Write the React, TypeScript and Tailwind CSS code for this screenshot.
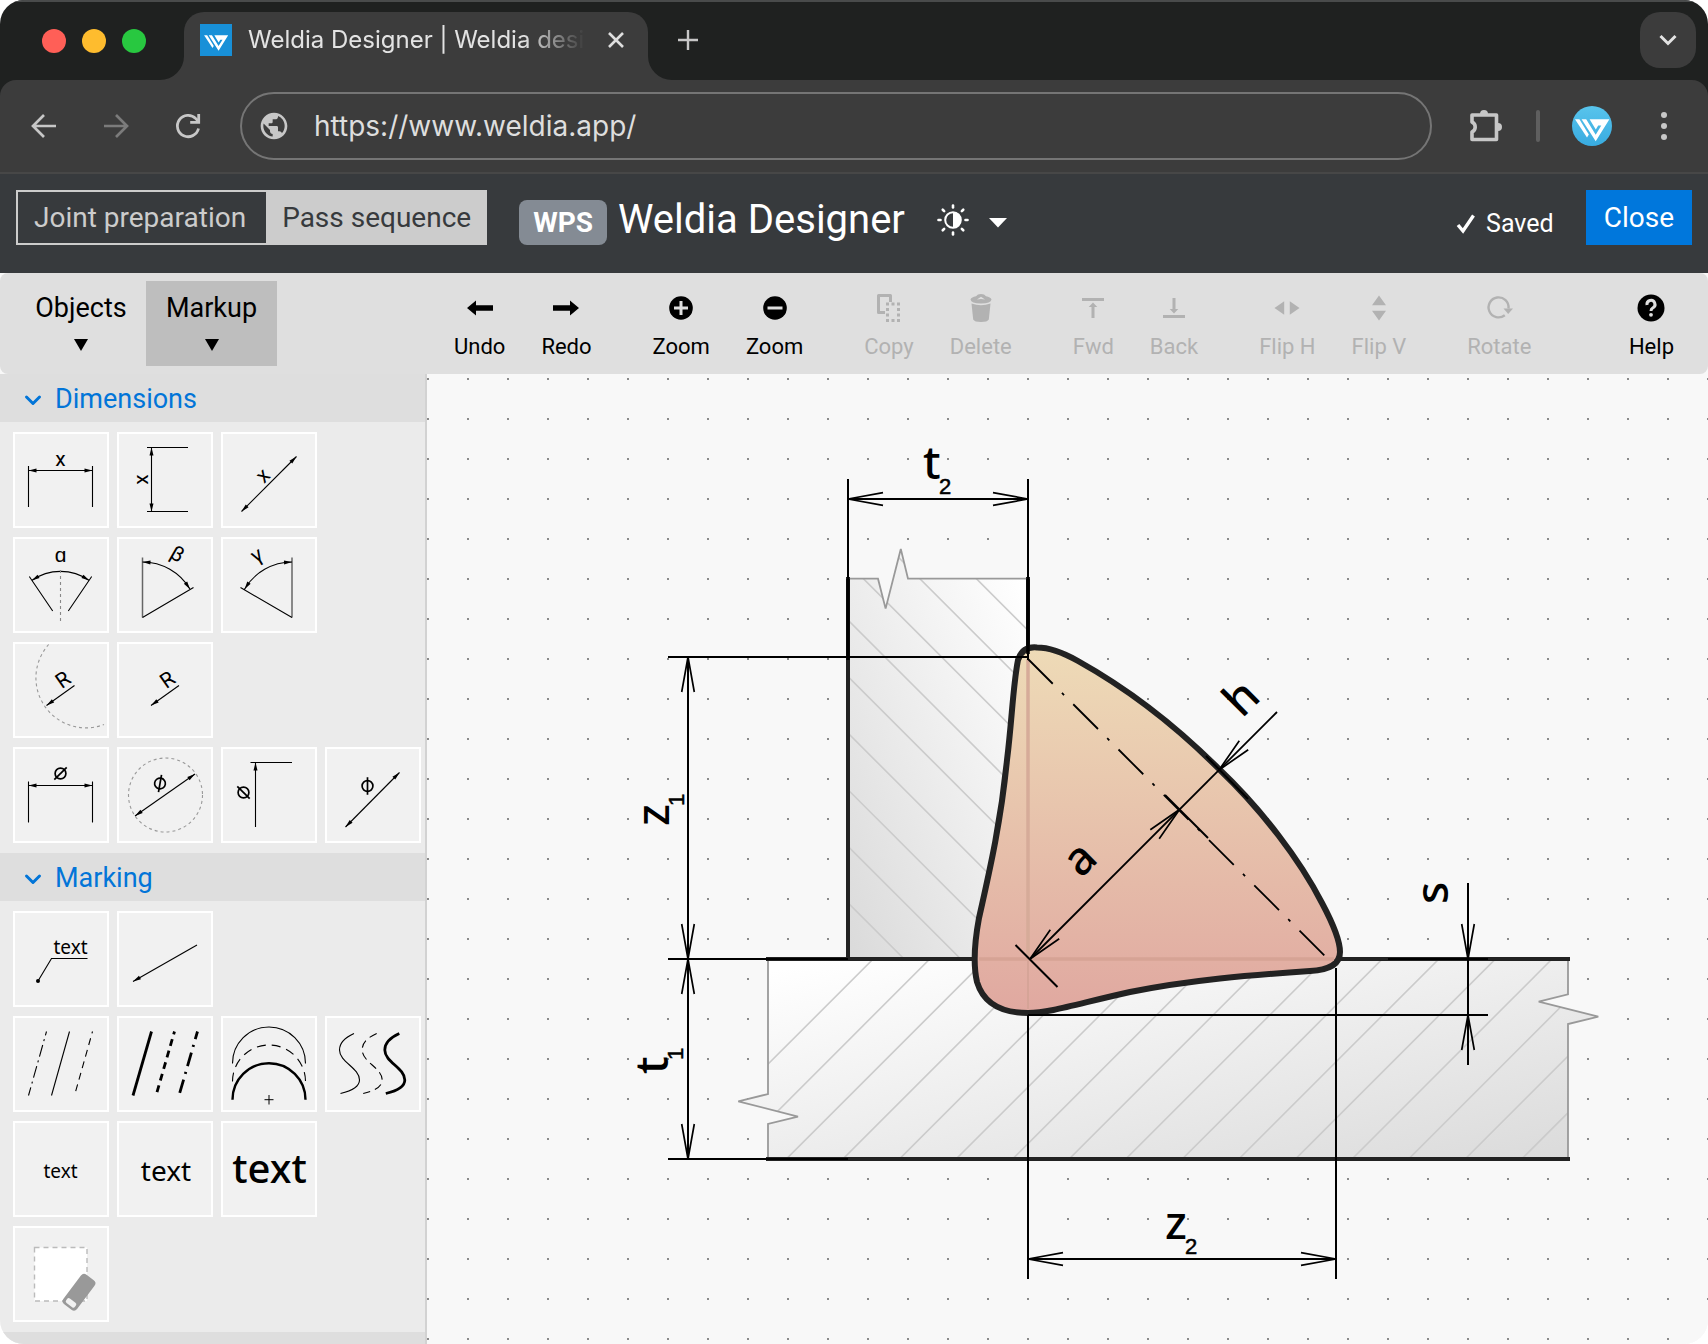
import React from "react";

type Kids = { children?: React.ReactNode };

/* ---------- browser chrome ---------- */

function Logo({ className }: { className: string }) {
  return (
    <svg viewBox="0 0 40 40" className={className} fill="#fff" aria-hidden="true">
      <path d="M3 13.3H7.4L16.8 28.6 15 31.6Z" />
      <path d="M9.6 13.3H14.2L23.7 28.7 29.3 19.6H26.2L23.8 23.4 17.6 13.3H37.4L23.7 35.2Z" />
    </svg>
  );
}

function Flare({ className }: { className: string }) {
  return (
    <svg viewBox="0 0 24 24" className={className} aria-hidden="true">
      <path d="M24 0A24 24 0 0 1 0 24H24Z" fill="#3c3c3c" />
    </svg>
  );
}

function TabStrip() {
  return (
    <div className="flex h-20 shrink-0 items-end border-t-2 border-[#494b4b] bg-[#1f2120]">
      <div className="flex h-20 items-center gap-4 pt-0.5 pr-[38px] pl-[42px]">
        <span className="size-6 rounded-full bg-[#ff5f57]" />
        <span className="size-6 rounded-full bg-[#febc2e]" />
        <span className="size-6 rounded-full bg-[#28c840]" />
      </div>
      <div className="relative flex h-[68px] w-[464px] items-center rounded-t-[20px] bg-[#3c3c3c] pb-3 pl-4">
        <Flare className="absolute bottom-0 -left-6 size-6" />
        <Flare className="absolute -right-6 bottom-0 size-6 -scale-x-100" />
        <span className="flex size-8 items-center justify-center bg-[#1890d8]">
          <Logo className="size-7" />
        </span>
        <span className="ml-4 w-[344px] font-[Inter,sans-serif] text-2xl whitespace-nowrap text-[#e3e3e3] [mask-image:linear-gradient(to_right,#000_80%,transparent_98%)]">
          Weldia Designer | Weldia desi
        </span>
        <button type="button" aria-label="Close tab" className="ml-3 text-[#dedede]">
          <svg viewBox="0 0 24 24" className="size-6" fill="none" stroke="currentColor" strokeWidth="2.6">
            <path d="M5 5 19 19M19 5 5 19" />
          </svg>
        </button>
      </div>
      <button type="button" aria-label="New tab" className="mb-7 ml-7 text-[#c7c7c7]">
        <svg viewBox="0 0 24 24" className="size-6" fill="none" stroke="currentColor" strokeWidth="2.4">
          <path d="M12 2V22M2 12H22" />
        </svg>
      </button>
      <button
        type="button"
        aria-label="Search tabs"
        className="mr-3 mb-3 ml-auto flex size-14 items-center justify-center rounded-[20px] bg-[#3c3c3c] text-[#e3e3e3]"
      >
        <svg viewBox="0 0 24 24" className="size-6" fill="none" stroke="currentColor" strokeWidth="3">
          <path d="M4.500 8 12 15.500 19.500 8" />
        </svg>
      </button>
    </div>
  );
}

function AddressBar() {
  return (
    <div className="bg-[#1f2120]">
      <div className="flex h-[94px] items-center rounded-t-2xl border-b-2 border-[#474747] bg-[#3c3c3c] text-[#c7c7c7]">
        <button type="button" aria-label="Back" className="ml-7">
          <svg viewBox="0 0 32 32" className="size-8" fill="none" stroke="currentColor" strokeWidth="2.700">
            <path d="M28 16H5.500M16 5 5 16 16 27" />
          </svg>
        </button>
        <button type="button" aria-label="Forward" className="ml-10 text-[#7b7b7b]">
          <svg viewBox="0 0 32 32" className="size-8" fill="none" stroke="currentColor" strokeWidth="2.700">
            <path d="M4 16H26.500M16 5 27 16 16 27" />
          </svg>
        </button>
        <button type="button" aria-label="Reload" className="ml-10">
          <svg viewBox="0 0 32 32" className="size-8" fill="none" stroke="currentColor" strokeWidth="2.800">
            <path d="M26.500 18.500A10.700 10.700 0 1 1 23.800 8.600L26.500 11.500" />
            <path d="M26.700 4V12.400H18.200" />
          </svg>
        </button>
        <div className="relative ml-9 flex h-[68px] flex-1 items-center rounded-full border-2 border-[#757575] pl-4">
          <svg viewBox="0 0 24 24" className="size-8 shrink-0" fill="currentColor" aria-hidden="true">
            <path d="M12 2C6.480 2 2 6.480 2 12s4.480 10 10 10 10-4.480 10-10S17.520 2 12 2zm-1 17.930c-3.950-.490-7-3.850-7-7.930 0-.620.080-1.210.210-1.790L9 15v1c0 1.100.900 2 2 2v1.930zm6.900-2.540c-.260-.810-1-1.390-1.900-1.390h-1v-3c0-.550-.450-1-1-1H8v-2h2c.550 0 1-.450 1-1V7h2c1.100 0 2-.900 2-2v-.410c2.930 1.190 5 4.060 5 7.410 0 2.080-.800 3.970-2.100 5.390z" />
          </svg>
          <input
            aria-label="Address"
            defaultValue="https://www.weldia.app/"
            className="ml-6 min-w-0 flex-1 bg-transparent font-[Inter,sans-serif] text-[28px] text-[#dedede] outline-none"
          />
        </div>
        <button type="button" aria-label="Extensions" className="ml-8">
          <svg viewBox="0 0 40 40" className="size-10" aria-hidden="true">
            <path
              d="M8 9H32.500V33.500H8V26A5.500 5.500 0 0 0 8 16Z"
              fill="none"
              stroke="currentColor"
              strokeWidth="3.600"
              strokeLinejoin="round"
            />
            <path d="M16 8A4 4 0 0 1 24 8ZM34 17A4 4 0 0 1 34 25Z" fill="currentColor" />
          </svg>
        </button>
        <span className="ml-8 h-8 w-1 rounded-full bg-[#5f5f5f]" />
        <button
          type="button"
          aria-label="Profile"
          className="ml-8 size-10 rounded-full bg-linear-to-b from-[#58c4ec] to-[#38abe0]"
        >
          <Logo className="size-10" />
        </button>
        <button type="button" aria-label="Menu" className="mr-7 ml-9">
          <svg viewBox="0 0 32 32" className="size-8" fill="currentColor">
            <circle cx="16" cy="5" r="3" />
            <circle cx="16" cy="16" r="3" />
            <circle cx="16" cy="27" r="3" />
          </svg>
        </button>
      </div>
    </div>
  );
}

/* ---------- application header ---------- */

const rays = [0, 45, 90, 135, 180, 225, 270, 315];

function AppHeader() {
  return (
    <header className="flex h-[99px] shrink-0 items-start bg-[#373a3d] px-4 pt-4 text-white">
      <div className="flex h-[55px] border-2 border-[#ccc] text-[28px]">
        <button type="button" className="pr-5 pl-4 leading-[51px] text-[#ccc]">
          Joint preparation
        </button>
        <button type="button" className="bg-[#ccc] pr-3.5 pl-4 leading-[51px] text-[#373a3d]">
          Pass sequence
        </button>
      </div>
      <span className="mt-2.5 ml-8 h-[45px] rounded-lg bg-[#848b94] px-3.5 text-[28px] leading-[45px] font-bold">
        WPS
      </span>
      <h1 className="ml-[11px] text-[40px] leading-[60px]">Weldia Designer</h1>
      <button type="button" aria-label="Theme" className="mt-3.5 ml-8 flex items-center gap-5">
        <svg viewBox="0 0 32 32" className="size-8" aria-hidden="true">
          <circle cx="16" cy="16" r="7.800" fill="none" stroke="#fff" strokeWidth="2" />
          <path d="M16 8A8 8 0 0 1 16 24Z" fill="#fff" />
          {rays.map((r) => (
            <path
              key={r}
              d="M16 1.500V3.500"
              stroke="#fff"
              strokeWidth="2.600"
              strokeLinecap="round"
              transform={`rotate(${r} 16 16)`}
            />
          ))}
        </svg>
        <svg viewBox="0 0 18 10" className="mt-1.5 h-2.5 w-[18px]" fill="#fff" aria-hidden="true">
          <path d="M0 0H18L9 9.500Z" />
        </svg>
      </button>
      <span className="mt-4 mr-8 ml-auto flex items-center gap-2.5 text-[25px] leading-9">
        <svg viewBox="0 0 20 20" className="size-5" fill="none" stroke="#fff" strokeWidth="3.400" aria-hidden="true">
          <path d="M2 11 7 17 17.500 1.500" />
        </svg>
        Saved
      </span>
      <button type="button" className="h-[55px] bg-[#0077dc] px-[18px] text-[28px]">
        Close
      </button>
    </header>
  );
}

/* ---------- toolbar ---------- */

function Icon({ children }: Kids) {
  return (
    <svg viewBox="0 0 32 32" className="size-8" fill="currentColor" aria-hidden="true">
      {children}
    </svg>
  );
}

const icons = {
  undo: <path d="M3 16 12 8.500V13.200H29V18.800H12V23.500Z" />,
  redo: <path d="M29 16 20 8.500V13.200H3V18.800H20V23.500Z" />,
  plus: (
    <>
      <circle cx="16" cy="16" r="11.800" />
      <path d="M16 9V23M9 16H23" stroke="#dfdfdf" strokeWidth="3" />
    </>
  ),
  minus: (
    <>
      <circle cx="16" cy="16" r="11.800" />
      <path d="M8.500 16H23.500" stroke="#dfdfdf" strokeWidth="3" />
    </>
  ),
  copy: (
    <>
      <path d="M17.500 10V3.500H5.500V20.500H12" fill="none" stroke="currentColor" strokeWidth="3" strokeLinejoin="round" />
      <path
        d="M13 10.500h3v3h-3zM18.500 10.500h3v3h-3zM24 10.500h3v3h-3zM13 16h3v3h-3zM24 16h3v3h-3zM13 21.500h3v3h-3zM24 21.500h3v3h-3zM13 27h3v3h-3zM18.500 27h3v3h-3zM24 27h3v3h-3z"
      />
    </>
  ),
  trash: (
    <>
      <path d="M6.500 11.500Q16 15 25.500 11.500L23.800 27.500Q22.500 30 16 30T8.200 27.500Z" />
      <path d="M5.500 7.600Q6.500 5 11 4.300Q12.500 2 16 2T21 4.300Q25.500 5 26.500 7.600Q26 11.500 16 11.500T5.500 7.600ZM12 7.600 16 4.800 20 7.600Q16 6.500 12 7.600Z" fillRule="evenodd" />
    </>
  ),
  fwd: <path d="M5 6H27V9H5ZM16 10.500 20.300 15H17.500V26H14.500V15H11.700Z" />,
  back: <path d="M5 26H27V23H5ZM16 21.500 20.300 17H17.500V6H14.500V17H11.700Z" />,
  flipH: <path d="M3.500 16 13.200 9.300V22.700ZM28.500 16 18.800 9.300V22.700Z" />,
  flipV: <path d="M16 3.500 9 13.200H23ZM16 28.500 9 18.800H23Z" />,
  rotate: (
    <>
      <path d="M21.800 23.200A10 10 0 1 1 25.500 16.500" fill="none" stroke="currentColor" strokeWidth="2.400" />
      <path d="M20.500 16.500H30L25.200 22Z" />
    </>
  ),
  help: (
    <>
      <circle cx="16" cy="16" r="13.500" />
      <path d="M12 13A4 4 0 1 1 17.700 16Q16 17 16 19" fill="none" stroke="#dfdfdf" strokeWidth="3" />
      <circle cx="16" cy="22.800" r="1.900" fill="#dfdfdf" />
    </>
  ),
};

type Tool = { label: string; icon: keyof typeof icons; off?: boolean };

const groups: Tool[][] = [
  [
    { label: "Undo", icon: "undo" },
    { label: "Redo", icon: "redo" },
  ],
  [
    { label: "Zoom", icon: "plus" },
    { label: "Zoom", icon: "minus" },
  ],
  [
    { label: "Copy", icon: "copy", off: true },
    { label: "Delete", icon: "trash", off: true },
  ],
  [
    { label: "Fwd", icon: "fwd", off: true },
    { label: "Back", icon: "back", off: true },
  ],
  [
    { label: "Flip H", icon: "flipH", off: true },
    { label: "Flip V", icon: "flipV", off: true },
  ],
  [{ label: "Rotate", icon: "rotate", off: true }],
];

function ToolButton({ label, icon, off }: Tool) {
  return (
    <button
      type="button"
      disabled={off}
      className="flex flex-col items-center gap-[9px] px-[18px] pt-[5px] text-[22px] leading-7 text-black disabled:text-[#b2b2b2]"
    >
      <Icon>{icons[icon]}</Icon>
      {label}
    </button>
  );
}

function Triangle() {
  return (
    <svg viewBox="0 0 14 12" className="mt-[15px] h-3 w-3.5" aria-hidden="true">
      <path d="M0 0H14L7 12Z" />
    </svg>
  );
}

function Toolbar() {
  return (
    <div className="bg-[#f8f8f8]">
      <div className="flex h-[101px] items-center rounded-lg bg-[#dfdfdf]">
        <div className="flex w-[436px] shrink-0 pl-4 text-[27px] leading-8">
          <button type="button" className="flex h-[85px] w-[130px] flex-col items-center pt-[11px]">
            Objects
            <Triangle />
          </button>
          <button type="button" className="flex h-[85px] w-[131px] flex-col items-center bg-[#bebebe] pt-[11px]">
            Markup
            <Triangle />
          </button>
        </div>
        <div className="flex flex-1 gap-[25px] pr-4">
          {groups.map((g, i) => (
            <div key={i} className="flex">
              {g.map((t) => (
                <ToolButton key={t.icon} {...t} />
              ))}
            </div>
          ))}
          <div className="ml-auto">
            <ToolButton label="Help" icon="help" />
          </div>
        </div>
      </div>
    </div>
  );
}

/* ---------- palette ---------- */

function Line({ x1, y1, x2, y2, start, end }: { x1: number; y1: number; x2: number; y2: number; start?: boolean; end?: boolean }) {
  const a = (Math.atan2(y2 - y1, x2 - x1) * 180) / Math.PI;
  return (
    <g>
      <path d={`M${x1} ${y1}L${x2} ${y2}`} />
      {start && <Head x={x1} y={y1} a={a + 180} />}
      {end && <Head x={x2} y={y2} a={a} />}
    </g>
  );
}

function Head({ x, y, a }: { x: number; y: number; a: number }) {
  return <path d="M0 0L-8 -2V2Z" fill="#000" stroke="none" transform={`translate(${x} ${y}) rotate(${a})`} />;
}

function Glyph({ x, y, a = 0, children }: Kids & { x: number; y: number; a?: number }) {
  return (
    <text
      transform={`translate(${x} ${y}) rotate(${a})`}
      y="6"
      fontSize="21"
      textAnchor="middle"
      fill="#000"
      stroke="none"
      fontFamily="Roboto, sans-serif"
    >
      {children}
    </text>
  );
}

function Diameter({ x, y, a = 0 }: { x: number; y: number; a?: number }) {
  return (
    <g transform={`translate(${x} ${y}) rotate(${a})`} strokeWidth="1.700">
      <circle r="5.400" />
      <path d="M-6.200 6.200 6.200-6.200" />
    </g>
  );
}

function Word({ x, y, size, weight = 400 }: { x: number; y: number; size: number; weight?: number }) {
  return (
    <text x={x} y={y} fontSize={size} fontWeight={weight} textAnchor="middle" fill="#000" stroke="none" fontFamily="Noto Sans, sans-serif">
      text
    </text>
  );
}

const S = "M27 15.500C17 20 12.500 25 12.500 32C12.500 44 32.500 50 32.500 62C32.500 69 24 73 13.500 75.500";

const dimensionRows: [string, React.ReactNode][][] = [
  [
    [
      "Horizontal dimension",
      <>
        <path d="M13.500 32V73M77.500 32V73" />
        <Line x1={13.5} y1={36.5} x2={77.5} y2={36.5} start end />
        <Glyph x={45.5} y={26}>x</Glyph>
      </>,
    ],
    [
      "Vertical dimension",
      <>
        <path d="M28 13.500H69M28 77.500H69" />
        <Line x1={32.5} y1={13.5} x2={32.5} y2={77.5} start end />
        <Glyph x={23} y={45.5} a={-90}>x</Glyph>
      </>,
    ],
    [
      "Aligned dimension",
      <>
        <Line x1={18.5} y1={77.5} x2={73.5} y2={22.5} start end />
        <Glyph x={40.5} y={42} a={-45}>x</Glyph>
      </>,
    ],
  ],
  [
    [
      "Symmetric angle",
      <>
        <path d="M16.700 41.500A50 50 0 0 1 74.300 41.500M14.300 37.500 37.700 72M76.700 37.500 53.300 72" />
        <path d="M45.500 31V84" stroke="#888" strokeDasharray="3 3" />
        <Head x={16.7} y={41.5} a={149} />
        <Head x={74.3} y={41.5} a={31} />
        <Glyph x={45.5} y={17}>ɑ</Glyph>
      </>,
    ],
    [
      "Right angle",
      <>
        <path d="M23.500 18.500V78.500" stroke="#666" strokeWidth="1.500" />
        <path d="M23.500 78.500 74.500 48.500M23.500 23A55.300 55.300 0 0 1 71 50.200" />
        <Head x={23.5} y={23} a={183} />
        <Head x={71} y={50.2} a={56} />
        <Glyph x={58} y={16} a={30}>β</Glyph>
      </>,
    ],
    [
      "Left angle",
      <>
        <path d="M69 18.500V78.500" stroke="#666" strokeWidth="1.500" />
        <path d="M69 78.500 17.500 48.500M69 23A55.300 55.300 0 0 0 21.500 50.200" />
        <Head x={69} y={23} a={-3} />
        <Head x={21.5} y={50.2} a={124} />
        <Glyph x={34} y={17} a={-30}>γ</Glyph>
      </>,
    ],
  ],
  [
    [
      "Arc radius",
      <>
        <path d="M33.700 .500A50 50 0 0 0 89 80.500" stroke="#999" strokeDasharray="3 3" />
        <Line x1={59.5} y1={41.5} x2={31.5} y2={61.5} end />
        <Glyph x={48.5} y={36.5} a={-35}>R</Glyph>
      </>,
    ],
    [
      "Radius",
      <>
        <Line x1={60} y1={41.5} x2={32} y2={61.5} end />
        <Glyph x={49} y={36.5} a={-35}>R</Glyph>
      </>,
    ],
  ],
  [
    [
      "Horizontal diameter",
      <>
        <path d="M13.500 32.500V73.500M77.500 32.500V73.500" />
        <Line x1={13.5} y1={36.5} x2={77.5} y2={36.5} start end />
        <Diameter x={45.5} y={24.500} />
      </>,
    ],
    [
      "Circle diameter",
      <>
        <circle cx="46.500" cy="46" r="37" stroke="#999" strokeDasharray="3 3" />
        <Line x1={16} y1={67} x2={76} y2={25} start end />
        <Diameter x={41} y={34.5} a={-35} />
      </>,
    ],
    [
      "Vertical diameter",
      <>
        <path d="M27.500 13.500H69" />
        <Line x1={32.5} y1={78} x2={32.5} y2={13.5} end />
        <Diameter x={20.5} y={43.5} a={-90} />
      </>,
    ],
    [
      "Aligned diameter",
      <>
        <Line x1={18.5} y1={78} x2={72.5} y2={23.5} start end />
        <Diameter x={40.5} y={37} a={-45} />
      </>,
    ],
  ],
];

const markingRows: [string, React.ReactNode][][] = [
  [
    [
      "Callout",
      <>
        <path d="M72.500 45.500H36.500L23 68" />
        <circle cx="23" cy="68" r="2" fill="#000" stroke="none" />
        <Word x={55.5} y={41} size={19} />
      </>,
    ],
    ["Arrow", <Line x1={78} y1={32} x2={14} y2={68.5} end />],
  ],
  [
    [
      "Thin lines",
      <>
        <path d="M31.500 13.500 13.500 77.500" strokeDasharray="12 4 2 4" strokeDashoffset="8" />
        <path d="M54.500 13.500 36.500 77.500" />
        <path d="M77.500 13.500 59.500 77.500" strokeDasharray="7 5" strokeDashoffset="5" />
      </>,
    ],
    [
      "Thick lines",
      <g strokeWidth="2.800">
        <path d="M32.500 13.500 14 77.500" />
        <path d="M55.500 13.500 37 77.500" strokeDasharray="7 5" strokeDashoffset="4" />
        <path d="M78.500 13.500 60 77.500" strokeDasharray="14 6 2 6" strokeDashoffset="6" />
      </g>,
    ],
    [
      "Arcs",
      <>
        <path d="M9.500 45.500A36.500 36.500 0 0 1 82.500 45.500" />
        <path d="M9.500 63.500A36.500 36.500 0 0 1 82.500 63.500" strokeDasharray="9 6" />
        <path d="M9.500 81.700A36.500 36.500 0 0 1 82.500 81.700" strokeWidth="2.400" />
        <path d="M46 77V86.500M41.500 81.700H50.500" strokeWidth="1" />
      </>,
    ],
    [
      "Curves",
      <>
        <path d={S} />
        <path d={S} transform="translate(22.700 0)" strokeDasharray="8 5" />
        <path d={S} transform="translate(45.300 0)" strokeWidth="2.800" />
      </>,
    ],
  ],
  [
    ["Small text", <Word x={45.5} y={55} size={19} />],
    ["Medium text", <Word x={47} y={58} size={28} />],
    ["Large text", <Word x={46.5} y={60} size={40} weight={500} />],
  ],
  [
    [
      "Eraser",
      <>
        <path d="M19.500 19.500H72V73H19.500Z" fill="#fff" stroke="#bbb" strokeWidth="1.400" strokeDasharray="5 4" />
        <g transform="translate(64 64.300) rotate(37)" stroke="none">
          <rect x="-8.500" y="-18.500" width="17" height="37" rx="4" fill="#999" />
          <rect x="-5.500" y="10.500" width="11" height="5.500" rx="2" fill="#f1f1f1" />
        </g>
      </>,
    ],
  ],
];

function SectionTitle({ children }: Kids) {
  return (
    <h2>
      <button type="button" className="flex h-12 w-full items-center gap-[13px] bg-[#dedede] pt-[3px] pl-6 text-[27px] text-[#0275d8]">
        <svg viewBox="0 0 18 18" className="size-[18px]" fill="none" stroke="currentColor" strokeWidth="3" strokeLinecap="round" strokeLinejoin="round" aria-hidden="true">
          <path d="M2.500 6 9 12.500 15.500 6" />
        </svg>
        {children}
      </button>
    </h2>
  );
}

function Tiles({ rows }: { rows: [string, React.ReactNode][][] }) {
  return (
    <div className="flex flex-col gap-[9px] py-2.5 pl-[13px]">
      {rows.map((row, i) => (
        <div key={i} className="flex gap-2">
          {row.map(([label, art]) => (
            <button key={label} type="button" aria-label={label} className="size-24 border-2 border-white bg-[#f1f1f1]">
              <svg viewBox="0 0 92 92" className="size-full" fill="none" stroke="#000" strokeWidth="1.100">
                {art}
              </svg>
            </button>
          ))}
        </div>
      ))}
    </div>
  );
}

function Palette() {
  return (
    <aside className="w-[427px] shrink-0 overflow-hidden border-r-2 border-[#d2d2d2] bg-[#ebebeb]">
      <SectionTitle>Dimensions</SectionTitle>
      <Tiles rows={dimensionRows} />
      <SectionTitle>Marking</SectionTitle>
      <Tiles rows={markingRows} />
      <div className="h-12 bg-[#dedede]" />
    </aside>
  );
}

/* ---------- drawing ---------- */

function Arrow({ x, y, a }: { x: number; y: number; a: number }) {
  return <path d="M-35 -6.300 0 0-35 6.300" strokeWidth="1.700" transform={`translate(${x} ${y}) rotate(${a})`} />;
}

function Label({ x, y, a = 0, sub, shift = 0, children }: Kids & { x: number; y: number; a?: number; sub?: string; shift?: number }) {
  return (
    <g transform={`translate(${x} ${y}) rotate(${a})`} fill="#000">
      <text fontSize="46" fontWeight="500" fontFamily="Noto Sans, sans-serif">
        {children}
      </text>
      {sub && (
        <text x={shift} y="15" fontSize="22" stroke="#000" strokeWidth="0.500" fontFamily="Liberation Sans, sans-serif">
          {sub}
        </text>
      )}
    </g>
  );
}

const hatch = Array.from({ length: 24 }, (_, i) => i);

const webShape = "M848 579H878L885.600 608.600 900.800 549 908 579H1028V959H848Z";
const baseShape =
  "M768 959H1568V994L1538.700 1001.700 1598.300 1016.700 1568 1024V1159H768V1124L798 1116.700 738.300 1101.300 768 1094Z";

function WeldDrawing() {
  return (
    <svg viewBox="427 374 1281 970" className="size-full" role="img" aria-label="Fillet weld cross-section">
      <defs>
        <linearGradient id="web" x1="1" y1="0" x2="0" y2="1">
          <stop offset="0.050" stopColor="#fff" />
          <stop offset="1" stopColor="#dadada" />
        </linearGradient>
        <linearGradient id="base" x1="0" y1="0" x2="1" y2="1">
          <stop offset="0.050" stopColor="#fff" />
          <stop offset="1" stopColor="#dadada" />
        </linearGradient>
        <linearGradient id="bead" x1="0" y1="0" x2="0" y2="1">
          <stop offset="0" stopColor="#eedbb7" />
          <stop offset="1" stopColor="#e0a8a0" />
        </linearGradient>
        <clipPath id="webClip">
          <path d={webShape} />
        </clipPath>
        <clipPath id="baseClip">
          <path d={baseShape} />
        </clipPath>
      </defs>

      <path d={webShape} fill="url(#web)" />
      <path d={baseShape} fill="url(#base)" />
      <g clipPath="url(#webClip)" stroke="#cbcbcb" strokeWidth="1.600">
        {hatch.map((i) => (
          <path key={i} d={`M848 ${450.300 + i * 56.57}l200 200`} />
        ))}
      </g>
      <g clipPath="url(#baseClip)" stroke="#cbcbcb" strokeWidth="1.600">
        {hatch.map((i) => (
          <path key={i} d={`M${647 + i * 56.57} 1185.200l260 -260`} />
        ))}
      </g>

      <g fill="none" stroke="#999" strokeWidth="1.800">
        <path d="M848 578.700H878L885.600 608.600 900.800 549 908 578.700H1028" />
        <path d="M768 959V1094L738.300 1101.300 798 1116.700 768 1124V1159" />
        <path d="M1568 959V994.300L1538.700 1001.700 1598.300 1016.700 1568 1024V1159" />
      </g>
      <g fill="none" stroke="#222" strokeWidth="4">
        <path d="M848 577V959M1028 577V959M766 959H1570M766 1159H1570" />
      </g>

      <path
        d="M1037 647.500C1027 646.500 1021 651 1018 660C1013 685 1012 720 1007 760C1001 820 991 865 979 918C974 945 973 965 977 982C984 1005 1003 1013 1028 1013C1050 1013 1080 1003 1130 992C1190 980 1250 975 1310 971C1330 970 1340 964 1340 952C1340 938 1330 918 1322 903C1300 860 1262 810 1219 769C1180 730 1130 690 1078 661C1062 652 1048 647.500 1037 647.500Z"
        fill="url(#bead)"
        stroke="#222"
        strokeWidth="6"
      />
      <path d="M1028 659V957" stroke="#d6ab99" strokeWidth="3.500" />
      <path d="M979 959H1334" stroke="#d6a395" strokeWidth="3.500" />
      <path d="M1028 961V1009" stroke="#d2a294" strokeWidth="1.500" />

      <g fill="none" stroke="#000" strokeWidth="2">
        <path d="M848 479V657M1028 479V660M848 499H1028" />
        <path d="M848 579V660M1028 579V654" strokeWidth="3.500" />
        <Arrow x={848} y={499} a={180} />
        <Arrow x={1028} y={499} a={0} />

        <path d="M668 657H1028M668 959H848M668 1159H848M688 657V1159" />
        <Arrow x={688} y={657} a={-90} />
        <Arrow x={688} y={959} a={90} />
        <Arrow x={688} y={959} a={-90} />
        <Arrow x={688} y={1159} a={90} />

        <path d="M1028 1015V1279M1336 968V1279M1028 1259H1336" />
        <Arrow x={1028} y={1259} a={180} />
        <Arrow x={1336} y={1259} a={0} />

        <path d="M1028 1015H1488M1388 959H1488M1468 883V1065" />
        <Arrow x={1468} y={959} a={90} />
        <Arrow x={1468} y={1015} a={-90} />

        <path d="M1028 659 1325 956" strokeWidth="1.800" strokeDasharray="35 13 3 13" />
        <path d="M1030 959 1277 712" strokeWidth="1.800" />
        <path d="M1015.500 945 1057.500 987M1165 795 1208 838M1206 756 1248 799" />
        <Arrow x={1030} y={959} a={135} />
        <Arrow x={1179.500} y={809.500} a={-45} />
        <Arrow x={1219} y={770} a={135} />
      </g>

      <Label x={923} y={479} sub="2" shift={16}>t</Label>
      <Label x={1165} y={1239} sub="2" shift={20}>z</Label>
      <Label x={669} y={826} a={-90} sub="1" shift={20}>z</Label>
      <Label x={668} y={1074} a={-90} sub="1" shift={14}>t</Label>
      <Label x={1448} y={904} a={-90}>s</Label>
      <Label x={1081} y={879} a={-45}>a</Label>
      <Label x={1242} y={719} a={-45}>h</Label>
    </svg>
  );
}

export default function App() {
  return (
    <div className="h-screen bg-white">
      <div className="flex h-full flex-col overflow-hidden rounded-3xl bg-[#f8f8f8] font-[Roboto,sans-serif] text-black">
        <TabStrip />
        <AddressBar />
        <AppHeader />
        <Toolbar />
        <div className="flex min-h-0 flex-1">
          <Palette />
          <main className="min-w-0 flex-1 bg-[#f8f8f8] bg-[radial-gradient(circle_at_1px_5px,#8a8a8a_1px,transparent_1px)] bg-size-[40px_40px]">
            <WeldDrawing />
          </main>
        </div>
      </div>
    </div>
  );
}
